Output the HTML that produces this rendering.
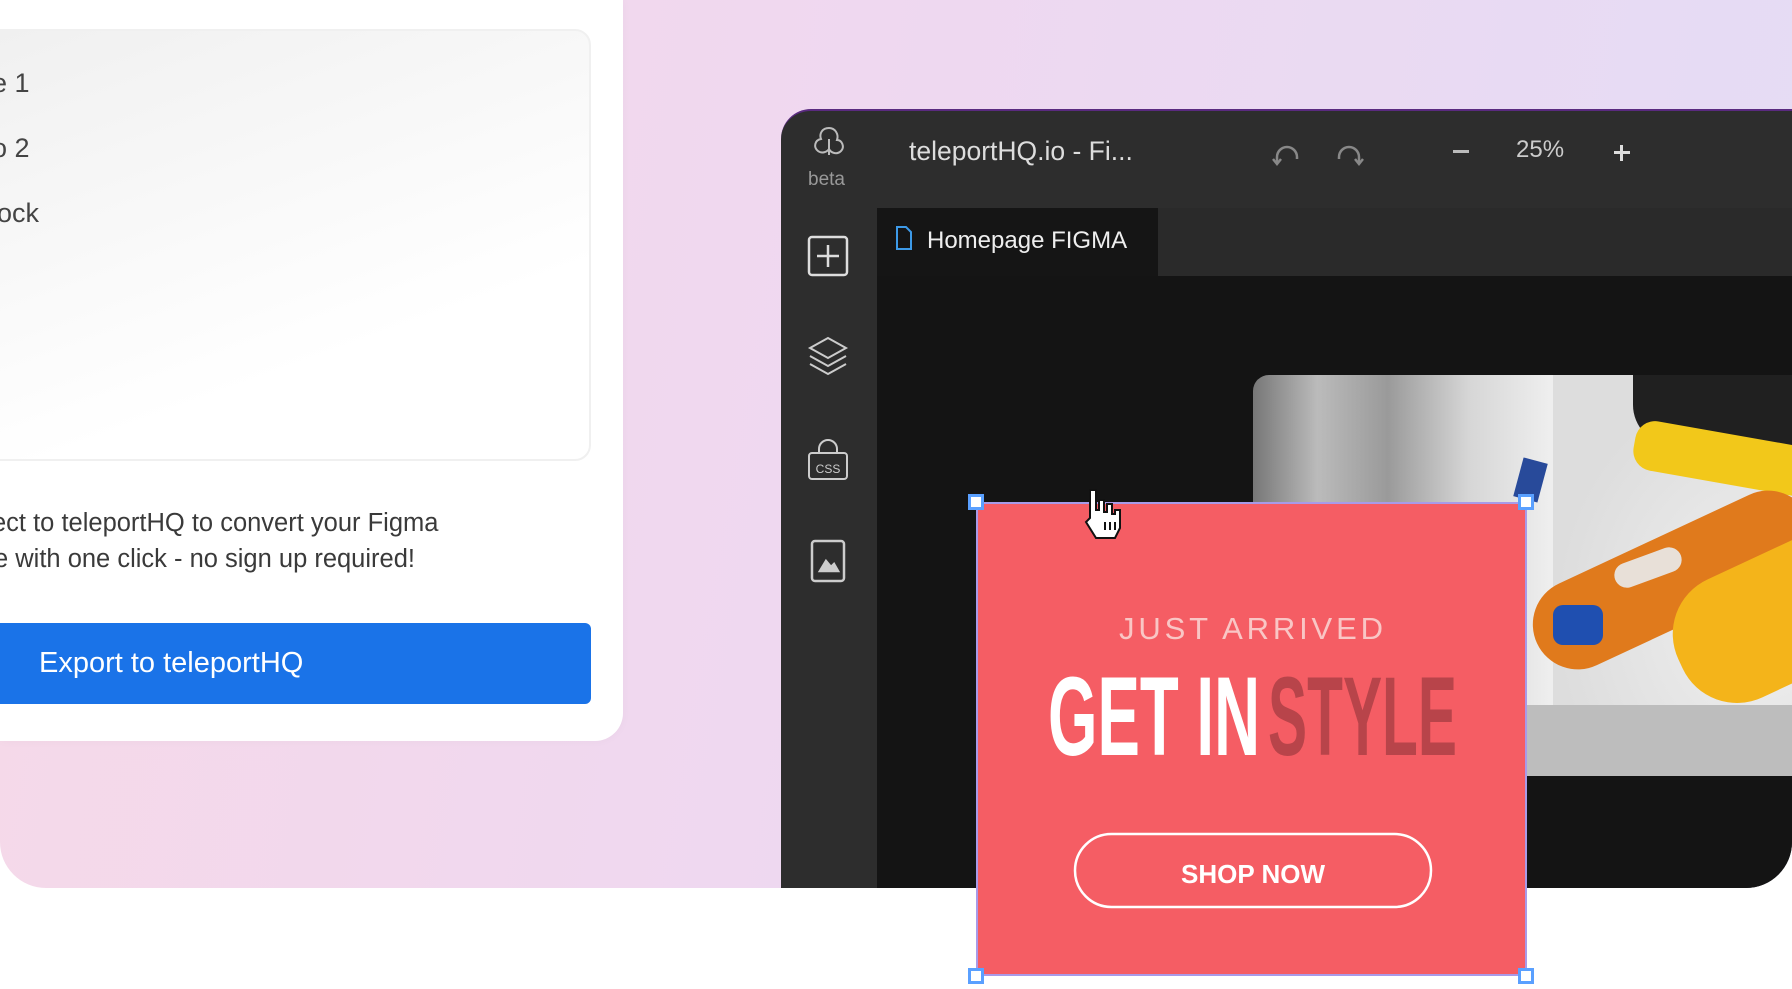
<!DOCTYPE html>
<html><head><meta charset="utf-8"><style>
*{margin:0;padding:0;box-sizing:border-box}
body{width:1792px;height:989px;overflow:hidden;background:#fff;font-family:"Liberation Sans",sans-serif;position:relative}
.bg{position:absolute;left:0;top:0;width:1792px;height:888px;border-radius:0 0 46px 46px;background:linear-gradient(100deg,#f6d9e8 0%,#efd8f0 45%,#e4dcf5 100%)}
.card{position:absolute;left:0;top:0;width:623px;height:741px;background:#fff;border-radius:0 0 28px 0;box-shadow:0 0 10px rgba(0,0,0,.03)}
.inner{position:absolute;left:-20px;top:29px;width:611px;height:432px;border-radius:16px;border:2px solid #f0f0f0;background:linear-gradient(160deg,#f0f0f0,#fff 70%)}
.t{position:absolute;color:#444;font-size:27px}
.p{position:absolute;left:0;color:#3a3a3a;font-size:25.5px;line-height:36px;white-space:nowrap}
.btn{position:absolute;left:0;top:623px;width:591px;height:81px;background:#1a73e8;border-radius:0 6px 6px 0;color:#fff;font-size:29px;line-height:81px;padding-left:39px}
.app{position:absolute;left:781px;top:109px;width:1011px;height:779px;background:#2d2d2d;border-radius:30px 0 46px 0;overflow:hidden;border-top:2px solid #5a2a80}
.canvas{position:absolute;left:96px;top:165px;right:0;bottom:0;background:#141414}
.tabbar{position:absolute;left:96px;top:97px;right:0;height:68px;background:#2a2a2a}
.tab{position:absolute;left:96px;top:97px;width:281px;height:68px;background:#151515;color:#eee;font-size:24px;line-height:66px;padding-left:50px}
.photo{position:absolute;left:472px;top:264px;right:0;height:401px;border-radius:16px 0 0 0;overflow:hidden;background:linear-gradient(90deg,#777 0%,#bbb 12%,#9a9a9a 25%,#d6d6d6 40%,#eee 55%,#e8e8e8 100%)}
</style></head><body>
<div class="bg"></div>
<div class="card">
 <div class="inner"></div>
 <div class="t" style="left:-8px;top:68px">e 1</div>
 <div class="t" style="left:-8px;top:133px">o 2</div>
 <div class="t" style="left:-3px;top:198px">ock</div>
 <div class="p" style="top:505px;left:-8px">ect to teleportHQ to convert your Figma</div>
 <div class="p" style="top:541px;left:-6px">e with one click - no sign up required!</div>
 <div class="btn">Export to teleportHQ</div>
</div>
<div class="app">
 <svg style="position:absolute;left:28px;top:14px" width="40" height="44" viewBox="0 0 40 44" fill="none" stroke="#bbb" stroke-width="2"><path d="M20 3c-7 0-10 6-8 11-6 1-8 8-3 12 4 3 9 1 11-2 2 4 8 6 12 2 4-4 1-11-4-11 2-6-2-12-8-12z"/><path d="M20 14v16"/></svg>
 <div style="position:absolute;left:27px;top:58px;color:#999;font-size:19px">beta</div>
 <div style="position:absolute;left:128px;top:25px;color:#ddd;font-size:26.5px">teleportHQ.io - Fi...</div>
 <svg style="position:absolute;left:490px;top:30px" width="110" height="30" fill="none" stroke="#888" stroke-width="2.5"><path d="M6 22V16a10 10 0 0 1 20 0v2"/><path d="M2 18l4 5 4-5"/><path d="M68 18v-2a10 10 0 0 1 20 0v6"/><path d="M84 18l4 5 4-5"/></svg>
 <div style="position:absolute;left:672px;top:39px;width:16px;height:3px;background:#bbb"></div>
 <div style="position:absolute;left:735px;top:25px;color:#ccc;font-size:24px">25%</div>
 <div style="position:absolute;left:833px;top:40px;width:16px;height:3px;background:#ddd"></div>
 <div style="position:absolute;left:839px;top:34px;width:3px;height:16px;background:#ddd"></div>
 <div class="tabbar"></div>
 <div class="tab">Homepage FIGMA</div>
 <svg style="position:absolute;left:114px;top:114px" width="18" height="26" fill="none" stroke="#3d9ae8" stroke-width="2"><path d="M2 2h9l5 5v17H2z"/></svg>
 <div class="canvas"></div>
 <svg style="position:absolute;left:26px;top:124px" width="42" height="42" fill="none" stroke="#ddd" stroke-width="2.5"><rect x="2" y="2" width="38" height="38" rx="3"/><path d="M21 10v22M10 21h22"/></svg>
 <svg style="position:absolute;left:26px;top:224px" width="42" height="42" fill="none" stroke="#ccc" stroke-width="2"><path d="M21 3L3 13l18 10 18-10z"/><path d="M3 21l18 10 18-10"/><path d="M3 29l18 10 18-10"/></svg>
 <svg style="position:absolute;left:26px;top:326px" width="42" height="46" fill="none" stroke="#ccc" stroke-width="2"><path d="M12 16v-4a9 9 0 0 1 18 0v4"/><rect x="2" y="16" width="38" height="26" rx="3"/><text x="21" y="36" font-size="12" font-family="Liberation Sans" fill="#ccc" stroke="none" text-anchor="middle">CSS</text></svg>
 <svg style="position:absolute;left:29px;top:428px" width="36" height="44" fill="none" stroke="#ccc" stroke-width="2.5"><rect x="2" y="2" width="32" height="40" rx="3"/><path d="M10 32l6-10 5 6 3-3 4 7z" fill="#ccc"/></svg>
 <div class="photo">
  <div style="position:absolute;left:300px;top:0;width:300px;height:401px;background:radial-gradient(ellipse at 70% 60%,#f0f0f0,#ddd 70%)"></div>
  <div style="position:absolute;left:380px;top:0;width:200px;height:70px;background:#202020;border-radius:0 0 0 40px"></div>
  <div style="position:absolute;left:380px;top:60px;width:200px;height:50px;background:#f2c81a;border-radius:20px;transform:rotate(10deg)"></div>
  <div style="position:absolute;left:270px;top:160px;width:300px;height:90px;background:#e07a1c;border-radius:50px;transform:rotate(-25deg)"></div>
  <div style="position:absolute;left:420px;top:190px;width:160px;height:130px;background:#f4b41a;border-radius:60px 0 0 60px;transform:rotate(-25deg)"></div>
  <div style="position:absolute;left:360px;top:180px;width:70px;height:25px;background:#e8e0d8;border-radius:20px;transform:rotate(-20deg)"></div>
  <div style="position:absolute;left:300px;top:230px;width:50px;height:40px;background:#1f4fb0;border-radius:10px"></div>
  <div style="position:absolute;left:265px;top:85px;width:25px;height:40px;background:#284a9a;transform:rotate(15deg)"></div>
  <div style="position:absolute;left:250px;top:330px;width:400px;height:80px;background:#bdbdbd"></div>
 </div>
</div>
<div style="position:absolute;left:976px;top:502px;width:551px;height:474px;background:#f55d64;border:2px solid #a99ae8"></div>
<svg style="position:absolute;left:976px;top:502px" width="551" height="474">
 <text x="275" y="137" font-family="Liberation Sans" font-size="31" fill="#f9c6c5" text-anchor="middle" textLength="264" lengthAdjust="spacing">JUST ARRIVED</text>
 <text x="72" y="253" font-family="Liberation Sans" font-weight="bold" font-size="112" fill="#fff" textLength="212" lengthAdjust="spacingAndGlyphs">GET IN</text>
 <text x="292" y="253" font-family="Liberation Sans" font-weight="bold" font-size="112" fill="#b8444a" textLength="189" lengthAdjust="spacingAndGlyphs">STYLE</text>
 <rect x="99" y="332" width="356" height="73" rx="36.5" fill="none" stroke="#fff" stroke-width="2.5"/>
 <text x="277" y="381" font-family="Liberation Sans" font-weight="bold" font-size="26" fill="#fff" text-anchor="middle">SHOP NOW</text>
</svg>
<div style="position:absolute;left:968px;top:494px;width:16px;height:16px;background:#fff;border:3px solid #5aa0ff"></div>
<div style="position:absolute;left:1518px;top:494px;width:16px;height:16px;background:#fff;border:3px solid #5aa0ff"></div>
<div style="position:absolute;left:968px;top:968px;width:16px;height:16px;background:#fff;border:3px solid #5aa0ff"></div>
<div style="position:absolute;left:1518px;top:968px;width:16px;height:16px;background:#fff;border:3px solid #5aa0ff"></div>
<svg style="position:absolute;left:1080px;top:486px" width="50" height="56"><path d="M10 4h6v20h3V14h5v12h3V18h5v10h3V24h5v18l-5 10H16L6 36l4-4z" fill="#fff" stroke="#111" stroke-width="2"/><path d="M25 36v8M30 36v8M35 36v8" stroke="#111" stroke-width="2"/></svg>
</body></html>
